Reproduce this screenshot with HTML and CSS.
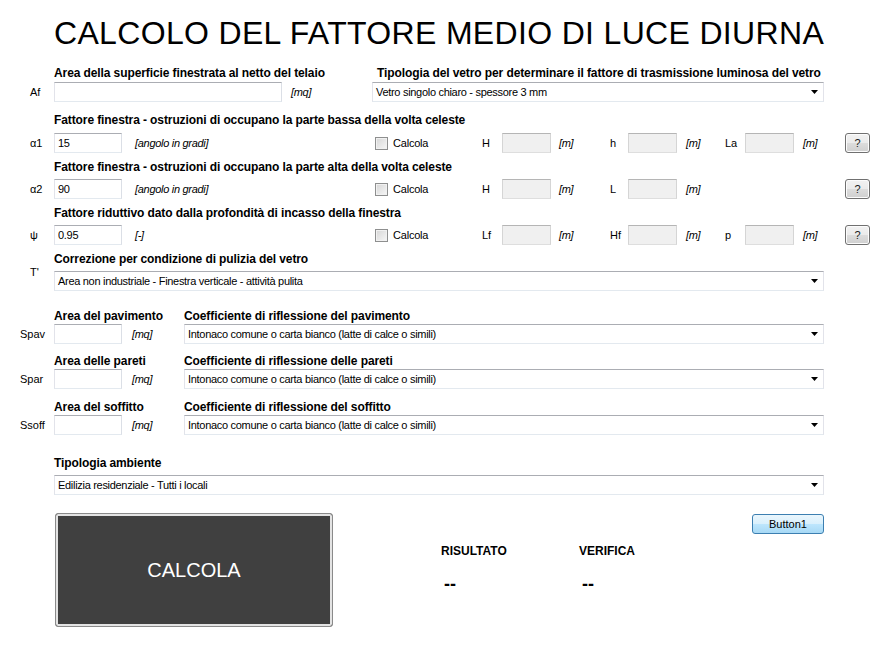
FILE: index.html
```html
<!DOCTYPE html>
<html lang="it">
<head>
    <meta charset="UTF-8">
    <title>Calcolo del fattore medio di luce diurna</title>
    <link rel="stylesheet" href="styles.css">
</head>
<body>
    <div class="form">
        <h1 class="title">CALCOLO DEL FATTORE MEDIO DI LUCE DIURNA</h1>

        <!-- superficie finestrata + tipo vetro -->
        <div class="field g-top f-first">
            <span class="cap c-left">Area della superficie finestrata al netto del telaio</span>
            <span class="cap c-glass">Tipologia del vetro per determinare il fattore di trasmissione luminosa del vetro</span>
            <span class="sym">Af</span>
            <input class="txt" type="text">
            <span class="unit">[mq]</span>
            <div class="combo"><span>Vetro singolo chiaro - spessore 3 mm</span><svg width="7" height="4" viewBox="0 0 7 4"><path d="M0 0h7L3.5 4z" fill="#000"/></svg></div>
        </div>

        <!-- alfa 1 -->
        <div class="field g-calc f-second">
            <span class="cap c-all">Fattore finestra - ostruzioni di occupano la parte bassa della volta celeste</span>
            <span class="sym">&alpha;1</span>
            <input class="txt" type="text" value="15">
            <span class="unit u-wide">[angolo in gradi]</span>
            <label class="check"><input type="checkbox">Calcola</label>
            <span class="lbl">H</span>
            <input class="txt" type="text" disabled>
            <span class="unit">[m]</span>
            <span class="lbl">h</span>
            <input class="txt" type="text" disabled>
            <span class="unit">[m]</span>
            <span class="lbl">La</span>
            <input class="txt" type="text" disabled>
            <span class="unit">[m]</span>
            <button class="help">?</button>
        </div>

        <!-- alfa 2 -->
        <div class="field g-calc">
            <span class="cap c-all">Fattore finestra - ostruzioni di occupano la parte alta della volta celeste</span>
            <span class="sym">&alpha;2</span>
            <input class="txt" type="text" value="90">
            <span class="unit u-wide">[angolo in gradi]</span>
            <label class="check"><input type="checkbox">Calcola</label>
            <span class="lbl">H</span>
            <input class="txt" type="text" disabled>
            <span class="unit">[m]</span>
            <span class="lbl">L</span>
            <input class="txt" type="text" disabled>
            <span class="unit">[m]</span>
            <button class="help last">?</button>
        </div>

        <!-- psi -->
        <div class="field g-calc">
            <span class="cap c-all">Fattore riduttivo dato dalla profondità di incasso della finestra</span>
            <span class="sym">&psi;</span>
            <input class="txt" type="text" value="0.95">
            <span class="unit u-wide">[-]</span>
            <label class="check"><input type="checkbox">Calcola</label>
            <span class="lbl">Lf</span>
            <input class="txt" type="text" disabled>
            <span class="unit">[m]</span>
            <span class="lbl">Hf</span>
            <input class="txt" type="text" disabled>
            <span class="unit">[m]</span>
            <span class="lbl">p</span>
            <input class="txt" type="text" disabled>
            <span class="unit">[m]</span>
            <button class="help">?</button>
        </div>

        <!-- pulizia -->
        <div class="field g-wide">
            <span class="cap c-all">Correzione per condizione di pulizia del vetro</span>
            <span class="sym sym-up">T'</span>
            <div class="combo"><span>Area non industriale - Finestra verticale - attività pulita</span><svg width="7" height="4" viewBox="0 0 7 4"><path d="M0 0h7L3.5 4z" fill="#000"/></svg></div>
        </div>

        <!-- superfici interne -->
        <div class="field g-room sep">
            <span class="cap c-left">Area del pavimento</span>
            <span class="cap">Coefficiente di riflessione del pavimento</span>
            <span class="sym sym-long">Spav</span>
            <input class="txt" type="text">
            <span class="unit u-room">[mq]</span>
            <div class="combo"><span>Intonaco comune o carta bianco (latte di calce o simili)</span><svg width="7" height="4" viewBox="0 0 7 4"><path d="M0 0h7L3.5 4z" fill="#000"/></svg></div>
        </div>

        <div class="field g-room">
            <span class="cap c-left">Area delle pareti</span>
            <span class="cap">Coefficiente di riflessione delle pareti</span>
            <span class="sym sym-long">Spar</span>
            <input class="txt" type="text">
            <span class="unit u-room">[mq]</span>
            <div class="combo"><span>Intonaco comune o carta bianco (latte di calce o simili)</span><svg width="7" height="4" viewBox="0 0 7 4"><path d="M0 0h7L3.5 4z" fill="#000"/></svg></div>
        </div>

        <div class="field g-room g-room-last">
            <span class="cap c-left">Area del soffitto</span>
            <span class="cap">Coefficiente di riflessione del soffitto</span>
            <span class="sym sym-long">Ssoff</span>
            <input class="txt" type="text">
            <span class="unit u-room">[mq]</span>
            <div class="combo"><span>Intonaco comune o carta bianco (latte di calce o simili)</span><svg width="7" height="4" viewBox="0 0 7 4"><path d="M0 0h7L3.5 4z" fill="#000"/></svg></div>
        </div>

        <!-- ambiente -->
        <div class="field g-wide sep">
            <span class="cap c-all">Tipologia ambiente</span>
            <span class="sym"></span>
            <div class="combo"><span>Edilizia residenziale - Tutti i locali</span><svg width="7" height="4" viewBox="0 0 7 4"><path d="M0 0h7L3.5 4z" fill="#000"/></svg></div>
        </div>

        <div class="actions">
            <button class="calc">CALCOLA</button>
            <div class="results">
                <div class="res">
                    <span class="res-title">RISULTATO</span>
                    <span class="res-value">--</span>
                </div>
                <div class="res">
                    <span class="res-title">VERIFICA</span>
                    <span class="res-value">--</span>
                </div>
            </div>
            <button class="btn1">Button1</button>
        </div>
    </div>
</body>
</html>
```

FILE: styles.css
```css
body {
    margin: 0;
    background: #fff;
    font-family: "Liberation Sans", Arial, sans-serif;
    font-size: 11px;
    color: #000;
}

.form {
    width: 884px;
    padding-top: 15px;
}

.title {
    margin: 0 0 0 54px;
    font-size: 32px;
    font-weight: normal;
    line-height: 36px;
    letter-spacing: 0.33px;
    white-space: nowrap;
}

/* ogni blocco: didascalia sopra, controlli sotto */
.field {
    display: grid;
    grid-template-rows: 14px 20px;
    row-gap: 5px;
    margin-top: 7px;
    align-items: center;
}
.f-first {
    margin-top: 15px;
    row-gap: 2px;
}
.f-second {
    margin-top: 11px;
    row-gap: 6px;
}
.sep {
    margin-top: 21px;
}

.g-top { grid-template-columns: 54px 228px 90px 452px; }
.g-calc { grid-template-columns: 54px 68px 253px 106px 21px 49px 58px 19px 49px 47px 21px 49px 51px 25px; }
.g-wide { grid-template-columns: 54px 770px; }
.g-room {
    grid-template-columns: 54px 68px 62px 640px;
    row-gap: 1px;
    margin-top: 10px;
}
.g-room.sep { margin-top: 18px; }
.g-room-last { margin-top: 11px; }

.cap {
    font-size: 12px;
    font-weight: bold;
    line-height: 14px;
    white-space: nowrap;
    letter-spacing: -0.1px;
}
.c-left { grid-column: 2 / 4; }
.c-all { grid-column: 2 / -1; }
.c-glass { padding-left: 5px; }
.g-top .cap:first-child, .g-room .cap:first-child { grid-column: 2 / 4; }
.g-top .c-glass, .g-room .cap + .cap { grid-column: 4; }

.sym {
    grid-column: 1;
    padding-left: 30px;
    white-space: nowrap;
}
.sym-long { padding-left: 20px; }
.sym-up {
    align-self: start;
    line-height: 12px;
    margin-top: -5px;
}

.txt {
    box-sizing: border-box;
    width: 100%;
    height: 20px;
    margin: 0;
    padding: 0 3px;
    border: 1px solid;
    border-color: #abadb3 #dbdfe6 #e3e9ef #e2e3ea;
    background: #fff;
    font: 11px "Liberation Sans", Arial, sans-serif;
    letter-spacing: -0.3px;
    color: #000;
}
.txt:disabled {
    background: #f0f0f0;
    border-color: #b5b5b5 #d5d5d5 #dedede #d5d5d5;
}

.unit {
    padding-left: 9px;
    font-style: italic;
    letter-spacing: -0.3px;
    white-space: nowrap;
}
.u-wide { padding-left: 13px; }
.g-calc .unit:nth-of-type(5) { padding-left: 8px; }
.u-room { padding-left: 10px; }

.lbl {
    padding-left: 1px;
    white-space: nowrap;
}

.check {
    display: flex;
    align-items: center;
    gap: 5px;
    letter-spacing: -0.2px;
}
.check input {
    appearance: none;
    box-sizing: border-box;
    width: 13px;
    height: 13px;
    margin: 0;
    border: 1px solid #8e8f8f;
    background: linear-gradient(135deg, #d6d6d6, #f7f7f7);
    box-shadow: inset 0 0 0 1px #f1f1f1;
}

.help {
    grid-column: 14;
    box-sizing: border-box;
    width: 25px;
    height: 20px;
    padding: 0;
    border: 1px solid #707070;
    border-radius: 3px;
    background: linear-gradient(#f2f2f2 0%, #ebebeb 50%, #dddddd 50%, #cfcfcf 100%);
    box-shadow: inset 0 0 0 1px #fcfcfc;
    font: 11px "Liberation Sans", Arial, sans-serif;
    color: #1a1a1a;
}

.combo {
    box-sizing: border-box;
    height: 20px;
    display: flex;
    align-items: center;
    justify-content: space-between;
    padding: 0 5px 0 3px;
    border: 1px solid;
    border-color: #abadb3 #e2e3ea #e3e9ef #e2e3ea;
    background: #fff;
    letter-spacing: -0.3px;
    white-space: nowrap;
}

/* pulsanti e risultati */
.actions {
    display: flex;
    align-items: flex-start;
    width: 824px;
    margin-top: 18px;
}
.calc {
    width: 278px;
    height: 114px;
    margin-left: 55px;
    border: 1px solid #8a8a8a;
    border-radius: 3px;
    background: #404040;
    box-shadow: inset 0 0 0 2px #e3e3e3;
    color: #fff;
    font: 20px "Liberation Sans", Arial, sans-serif;
}

.results {
    display: flex;
    margin-left: 108px;
    padding-top: 31px;
}
.res {
    display: flex;
    flex-direction: column;
    width: 138px;
}
.res-title {
    font-size: 12px;
    font-weight: bold;
    line-height: 14px;
}
.res-value {
    margin-top: 16px;
    padding-left: 3px;
    font-size: 18px;
    font-weight: bold;
    line-height: 20px;
}

.btn1 {
    margin-left: auto;
    margin-top: 1px;
    width: 72px;
    height: 20px;
    padding: 0;
    border: 1px solid #3c7fb1;
    border-radius: 3px;
    background: linear-gradient(#eaf6fd 0%, #d9f0fc 50%, #bee6fd 50%, #a7d9f5 100%);
    font: 11px "Liberation Sans", Arial, sans-serif;
    color: #000;
}
```
